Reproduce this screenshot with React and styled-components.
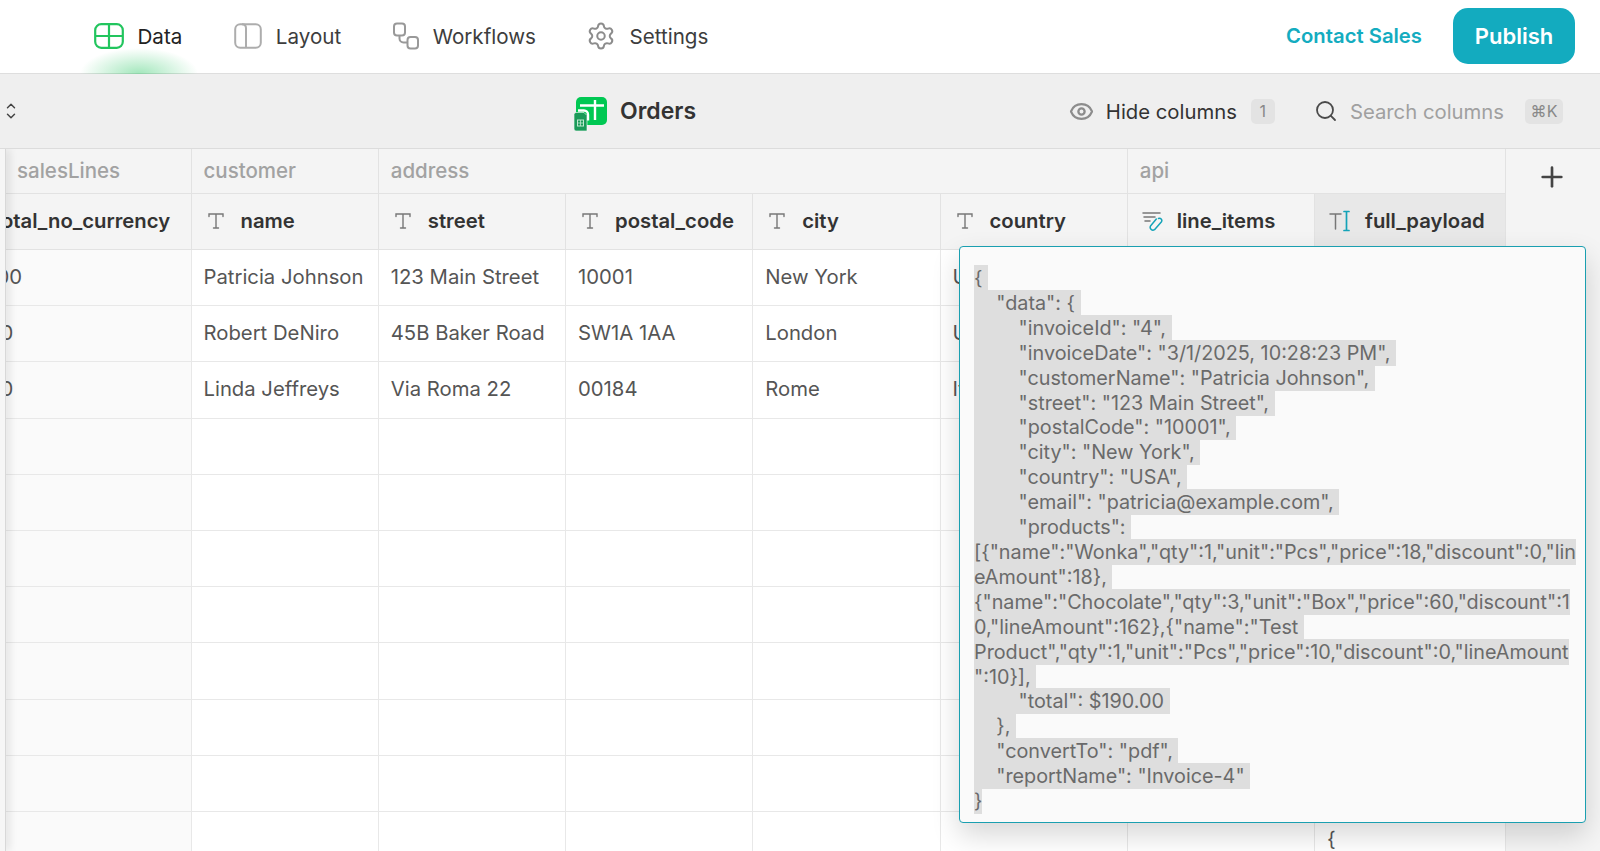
import React from "react";
import styled, { createGlobalStyle } from "styled-components";
import { Eye, Search, Plus, Settings, ChevronUp, ChevronDown } from "lucide-react";

const GlobalStyle = createGlobalStyle`
  html, body {
    margin: 0;
    padding: 0;
    background: #ffffff;
    font-family: "Inter", "Liberation Sans", sans-serif;
  }
`;

const Page = styled.div`
  width: 1600px;
  height: 851px;
  display: flex;
  flex-direction: column;
  overflow: hidden;
`;

const TopBar = styled.header`
  height: 73px;
  flex: none;
  display: flex;
  align-items: center;
  padding: 0 25px 0 94px;
  background: #ffffff;
  border-bottom: 1px solid #dedede;
`;

const NavItem = styled.div`
  position: relative;
  height: 100%;
  box-sizing: border-box;
  padding-bottom: 1px;
  display: flex;
  align-items: center;
  gap: 13.5px;
  margin-right: ${(p) => p.$gap || 52}px;
  font-size: 20.6px;
  color: ${(p) => (p.$active ? "#222222" : "#3d3d3d")};

  ${(p) =>
    p.$active &&
    `&::after {
      content: "";
      position: absolute;
      left: -14px;
      bottom: -1px;
      width: 118px;
      height: 26px;
      background: radial-gradient(ellipse 50% 100% at 50% 100%, rgba(34, 197, 94, 0.42), rgba(34, 197, 94, 0));
    }`}
`;

const TopActions = styled.div`
  margin-left: auto;
  margin-bottom: 2px;
  display: flex;
  align-items: center;
  gap: 31px;
`;

const ContactLink = styled.a`
  font-size: 20.3px;
  font-weight: 600;
  color: #14acc0;
`;

const PublishButton = styled.button`
  width: 122px;
  height: 56px;
  border: none;
  border-radius: 15px;
  background: #13abbf;
  color: #ffffff;
  font-family: inherit;
  font-size: 22px;
  font-weight: 600;
`;

const Toolbar = styled.div`
  height: 74px;
  flex: none;
  display: grid;
  grid-template-columns: 570px auto 1fr;
  align-items: center;
  padding: 0 37px 0 4px;
  background: #efefef;
  border-bottom: 1px solid #dcdcdc;
`;

const SortToggle = styled.div`
  display: flex;
  flex-direction: column;
  align-items: flex-start;
  color: #444444;

  svg {
    margin: -2px 0;
  }
`;

const TableTitle = styled.div`
  display: flex;
  align-items: center;
  gap: 12px;
  font-size: 23px;
  font-weight: 600;
  color: #333333;

  svg {
    margin-top: 5px;
  }
`;

const ToolbarRight = styled.div`
  justify-self: end;
  display: flex;
  align-items: center;
  font-size: 20.3px;
  color: #333333;
`;

const KeyBadge = styled.span`
  display: inline-flex;
  align-items: center;
  justify-content: center;
  height: 25px;
  min-width: ${(p) => p.$width}px;
  border-radius: 5px;
  background: #e3e3e3;
  color: #888888;
  font-size: 16px;
`;

const HideColumns = styled.div`
  display: flex;
  align-items: center;
  gap: 12px;
  margin-right: 39px;

  svg {
    color: #8c8c8c;
  }

  ${KeyBadge} {
    margin-left: 2px;
  }
`;

const SearchBox = styled.div`
  display: flex;
  align-items: center;
  gap: 12px;
  color: #a0a0a0;

  svg {
    color: #4a4a4a;
  }

  ${KeyBadge} {
    margin-left: 9px;
  }
`;

const TableArea = styled.div`
  position: relative;
  flex: 1;
  min-height: 0;
  overflow: hidden;
`;

const PinnedEdge = styled.div`
  position: absolute;
  left: 0;
  top: 0;
  bottom: 0;
  width: 5px;
  background: #f6f6f6;
  border-right: 1px solid #d8d8d8;
  box-shadow: 3px 0 8px rgba(0, 0, 0, 0.12);
`;

const Grid = styled.div`
  display: grid;
  width: 1652px;
  margin-left: -52px;
  grid-template-columns: 243.5px repeat(6, 187.25px) 191px 1fr;
  grid-template-rows: 45px 56px;
  grid-auto-rows: 56.2px;
`;

const GroupCell = styled.div`
  grid-column: span ${(p) => p.$span || 1};
  display: flex;
  align-items: center;
  padding: 0 0 1px ${(p) => p.$inset || 12}px;
  background: #f4f4f4;
  border-right: 1.5px solid #e2e2e2;
  border-bottom: 1.5px solid #e2e2e2;
  font-size: 20.5px;
  font-weight: 500;
  color: #a2a2a2;
`;

const HeadCell = styled.div`
  display: flex;
  align-items: center;
  gap: ${(p) => p.$gap || 15}px;
  padding: 0 0 2px ${(p) => p.$inset || 14}px;
  background: ${(p) => (p.$selected ? "#e8e8e8" : "#f4f4f4")};
  border-right: 1.5px solid #e2e2e2;
  border-bottom: 1.5px solid #e2e2e2;
  font-size: 20.3px;
  font-weight: 600;
  color: #333333;
  white-space: nowrap;
`;

const AddColumn = styled.div`
  grid-column: 9;
  grid-row: 1 / span 2;
  display: flex;
  justify-content: flex-start;
  padding: 12px 0 0 30px;
  background: #f4f4f4;
  color: #444444;
`;

const Cell = styled.div`
  display: flex;
  align-items: center;
  padding: 0 0 2px ${(p) => (p.$pinned ? 10 : 12)}px;
  background: ${(p) => (p.$pinned ? "#fafafa" : "#ffffff")};
  border-right: 1.5px solid #e8e8e8;
  border-bottom: 1.5px solid #e8e8e8;
  font-size: 20.3px;
  color: #555555;
  white-space: nowrap;
  overflow: hidden;
`;

const Filler = styled.div`
  background: #f5f5f5;
`;

const CellPopup = styled.div`
  position: absolute;
  left: 959px;
  top: 97px;
  width: 627px;
  height: 577px;
  box-sizing: border-box;
  padding: 19px 14px 0;
  background: #fafafa;
  border: 1.5px solid #1a9fb0;
  border-radius: 4px;
  box-shadow: 0 12px 28px rgba(0, 0, 0, 0.16);
  font-size: 19.8px;
  line-height: 24.9px;
  color: #6a6a6a;
  white-space: pre;
`;

const Selected = styled.span`
  background: #dedede;
  padding: 1px 0;
`;

const TextTypeIcon = () => (
  <svg width="20" height="20" viewBox="0 0 20 20" fill="none" stroke="#777777" strokeWidth="1.4" strokeLinecap="round">
    <path d="M3 5.5V3h14v2.5M10 3v14M7.5 17h5" />
  </svg>
);

const ItemsIcon = () => (
  <svg width="22" height="22" viewBox="0 0 22 22" fill="none" strokeWidth="1.5" strokeLinecap="round" strokeLinejoin="round">
    <path d="M2 3h17M3 7h11M4 11h5" stroke="#777777" />
    <path d="M17.5 8.5a2.3 2.3 0 0 1 3 3.2l-7 8a2.8 2.8 0 0 1-4-3.6l5.8-7" stroke="#14a3b8" />
  </svg>
);

const PayloadIcon = () => (
  <svg width="24" height="24" viewBox="0 0 24 24" fill="none" strokeWidth="1.5" strokeLinecap="round">
    <path d="M2 5h11M7.5 5v15" stroke="#777777" />
    <path d="M16 2.5h5M18.5 2.5v19M16 21.5h5" stroke="#14a3b8" strokeWidth="1.7" />
  </svg>
);

const DataIcon = () => (
  <svg width="30" height="26" viewBox="0 0 30 26" fill="none" stroke="#22c55e" strokeWidth="2.2">
    <rect x="1.2" y="1.2" width="27.6" height="23.6" rx="6" />
    <path d="M15 1.2v23.6M1.2 13h27.6" />
  </svg>
);

const LayoutIcon = () => (
  <svg width="28" height="26" viewBox="0 0 28 26" fill="none" stroke="#adadad" strokeWidth="2">
    <rect x="1.2" y="1.2" width="25.6" height="23.6" rx="5" />
    <path d="M8 1.2c2.5 0 4 1.5 4 4V24.8" />
  </svg>
);

const WorkflowIcon = () => (
  <svg width="26" height="28" viewBox="0 0 26 28" fill="none" stroke="#999999" strokeWidth="2">
    <rect x="1" y="1.5" width="11" height="12" rx="3" />
    <rect x="14.5" y="15" width="10.5" height="11.5" rx="3" />
    <path d="M6.5 13.5v3a4 4 0 0 0 4 4h4" />
  </svg>
);

const OrdersLogo = () => (
  <svg width="34" height="34" viewBox="0 0 34 34">
    <rect x="2" y="0" width="31" height="28" rx="5" fill="#00c853" />
    <path d="M21 3v20M6 8.5h24M4 13.5h6a4 4 0 0 1 4 4v6" fill="none" stroke="#ffffff" strokeWidth="2.4" />
    <path d="M2 15.5h8l3 3v15.5H2a2 2 0 0 1-2-2V17.5a2 2 0 0 1 2-2z" fill="#1b9a59" stroke="#ffffff" strokeWidth="0.6" />
    <rect x="3.5" y="23" width="6" height="6" fill="none" stroke="#bfe8cf" strokeWidth="1" />
    <path d="M6.5 23v6M3.5 26h6" stroke="#bfe8cf" strokeWidth="0.8" />
  </svg>
);

const columns = ["name", "street", "postal_code", "city", "country"];

const rows = [
  ["190.00", "Patricia Johnson", "123 Main Street", "10001", "New York", "USA"],
  ["85.00", "Robert DeNiro", "45B Baker Road", "SW1A 1AA", "London", "UK"],
  ["85.00", "Linda Jeffreys", "Via Roma 22", "00184", "Rome", "Italy"],
];

const payload = `{ 
    "data": { 
        "invoiceId": "4", 
        "invoiceDate": "3/1/2025, 10:28:23 PM", 
        "customerName": "Patricia Johnson", 
        "street": "123 Main Street", 
        "postalCode": "10001", 
        "city": "New York", 
        "country": "USA", 
        "email": "patricia@example.com", 
        "products": 
[{"name":"Wonka","qty":1,"unit":"Pcs","price":18,"discount":0,"lin
eAmount":18}, 
{"name":"Chocolate","qty":3,"unit":"Box","price":60,"discount":1
0,"lineAmount":162},{"name":"Test 
Product","qty":1,"unit":"Pcs","price":10,"discount":0,"lineAmount
":10}], 
        "total": $190.00 
    }, 
    "convertTo": "pdf", 
    "reportName": "Invoice-4" 
}`;

const App = () => {
  const emptyRows = Array.from({ length: 8 }, (_, i) => i);

  return (
    <Page>
      <GlobalStyle />
      <TopBar>
        <NavItem $active>
          <DataIcon />
          Data
        </NavItem>
        <NavItem>
          <LayoutIcon />
          Layout
        </NavItem>
        <NavItem $gap={50}>
          <WorkflowIcon />
          Workflows
        </NavItem>
        <NavItem>
          <Settings size={30} color="#8c8c8c" strokeWidth={1.6} />
          Settings
        </NavItem>
        <TopActions>
          <ContactLink>Contact Sales</ContactLink>
          <PublishButton>Publish</PublishButton>
        </TopActions>
      </TopBar>

      <Toolbar>
        <SortToggle>
          <ChevronUp size={14} strokeWidth={2.5} />
          <ChevronDown size={14} strokeWidth={2.5} />
        </SortToggle>
        <TableTitle>
          <OrdersLogo />
          Orders
        </TableTitle>
        <ToolbarRight>
          <HideColumns>
            <Eye size={25} strokeWidth={2.2} />
            Hide columns
            <KeyBadge $width={24}>1</KeyBadge>
          </HideColumns>
          <SearchBox>
            <Search size={24} strokeWidth={1.8} />
            Search columns
            <KeyBadge $width={38}>⌘K</KeyBadge>
          </SearchBox>
        </ToolbarRight>
      </Toolbar>

      <TableArea>
        <Grid>
          <GroupCell $inset={69}>salesLines</GroupCell>
          <GroupCell>customer</GroupCell>
          <GroupCell $span={4}>address</GroupCell>
          <GroupCell $span={2}>api</GroupCell>
          <AddColumn>
            <Plus size={32} strokeWidth={2} />
          </AddColumn>

          <HeadCell $inset={11}>
            <TextTypeIcon />
            total_no_currency
          </HeadCell>
          {columns.map((name) => (
            <HeadCell key={name}>
              <TextTypeIcon />
              {name}
            </HeadCell>
          ))}
          <HeadCell $inset={13} $gap={14}>
            <ItemsIcon />
            line_items
          </HeadCell>
          <HeadCell $selected $inset={13} $gap={13}>
            <PayloadIcon />
            full_payload
          </HeadCell>

          {rows.map((row) => (
            <React.Fragment key={row[1]}>
              {row.map((value, i) => (
                <Cell key={i} $pinned={i === 0}>
                  {value}
                </Cell>
              ))}
              <Cell />
              <Cell />
              <Filler />
            </React.Fragment>
          ))}

          {emptyRows.map((r) => (
            <React.Fragment key={r}>
              <Cell $pinned />
              <Cell />
              <Cell />
              <Cell />
              <Cell />
              <Cell />
              <Cell />
              <Cell>{r === 7 ? "{" : ""}</Cell>
              <Filler />
            </React.Fragment>
          ))}
        </Grid>
        <PinnedEdge />
        <CellPopup>
          <Selected>{payload}</Selected>
        </CellPopup>
      </TableArea>
    </Page>
  );
};

export default App;
